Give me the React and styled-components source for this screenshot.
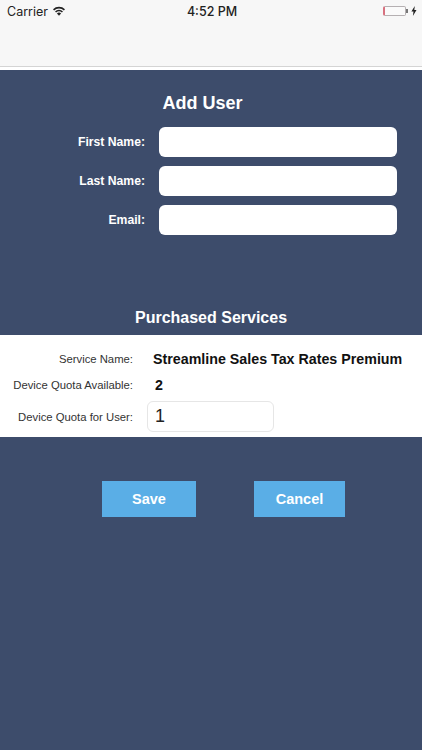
import React from 'react';
import styled, { createGlobalStyle } from 'styled-components';

const GlobalStyle = createGlobalStyle`
  html, body {
    margin: 0;
    padding: 0;
    background: #3d4c6b;
  }
  * {
    box-sizing: border-box;
  }
`;

const Page = styled.div`
  width: 422px;
  height: 750px;
  overflow: hidden;
  display: flex;
  flex-direction: column;
  background: #3d4c6b;
  font-family: "Liberation Sans", Arial, sans-serif;
`;

const Header = styled.div`
  height: 70px;
  background: #f7f7f7;
  border-bottom: 3px solid #fff;
  box-shadow: inset 0 -1px 0 #d4d4d4;
`;

const StatusBar = styled.div`
  height: 22px;
  display: grid;
  grid-template-columns: 1fr auto 1fr;
  align-items: center;
  padding: 0 5px 0 7px;
  color: #222;
  font-family: Inter, "Liberation Sans", sans-serif;
  font-size: 12.5px;
`;

const Carrier = styled.div`
  display: flex;
  align-items: center;
  gap: 5px;
`;

const Clock = styled.div`
  font-weight: 500;
  font-size: 12.5px;
`;

const Power = styled.div`
  display: flex;
  align-items: center;
  justify-content: flex-end;
  gap: 5px;
`;

const Battery = styled.div`
  position: relative;
  width: 23px;
  height: 10px;
  border: 1px solid #b5b0b2;
  border-left: 2px solid #d8717f;
  border-radius: 2px;
  background: #fafafa;
  &::after {
    content: '';
    position: absolute;
    right: -3px;
    top: 2px;
    width: 2px;
    height: 4px;
    background: #777;
  }
`;

const Section = styled.div`
  display: flex;
  flex-direction: column;
`;

const Title = styled.h2`
  margin: 0;
  text-align: center;
  color: #fff;
  font-weight: 700;
  font-size: ${({ $size }) => $size}px;
  line-height: 24px;
`;

const UserForm = styled(Section)`
  padding: 21px 25px 0 0;
  height: 218px;
  flex: none;
`;

const AddTitle = styled(Title)`
  margin: 0 0 0 8px;
`;

const FormRows = styled.div`
  margin-top: 12px;
  display: flex;
  flex-direction: column;
  gap: 9px;
`;

const FormRow = styled.label`
  display: grid;
  grid-template-columns: 145px 1fr;
  column-gap: 14px;
  align-items: center;
`;

const FormLabel = styled.span`
  padding-bottom: 1px;
  text-align: right;
  color: #fff;
  font-size: 12.2px;
  font-weight: 700;
`;

const FormInput = styled.input`
  width: 100%;
  height: 30px;
  border: none;
  border-radius: 6px;
  background: #fff;
  outline: none;
`;

const ServiceTitle = styled(Title)`
  margin-top: 18px;
`;

const ServicePanel = styled.div`
  margin-top: 5px;
  height: 102px;
  background: #fff;
  padding-top: 13px;
  display: flex;
  flex-direction: column;
`;

const ServiceRow = styled.div`
  display: grid;
  grid-template-columns: 133px 1fr;
  align-items: center;
  height: ${({ $height }) => $height}px;
`;

const ServiceLabel = styled.span`
  text-align: right;
  color: #333;
  font-size: 11.3px;
`;

const ServiceValue = styled.span`
  margin-left: ${({ $indent }) => $indent}px;
  color: #111;
  font-weight: 700;
  font-size: 14.25px;
  white-space: nowrap;
`;

const QuotaInput = styled.input`
  margin-left: 14px;
  width: 127px;
  height: 31px;
  border: 1px solid #e6e6e6;
  border-radius: 6px;
  padding: 0 7px;
  font-family: inherit;
  font-size: 18px;
  color: #222;
  outline: none;
`;

const Actions = styled.div`
  margin-top: 44px;
  display: flex;
  padding-left: 102px;
  gap: 58px;
`;

const ActionButton = styled.button`
  width: ${({ $width }) => $width}px;
  height: 36px;
  padding: 0 0 1px;
  border: none;
  background: #5aaee6;
  color: #fff;
  font-family: inherit;
  font-size: 14.5px;
  font-weight: 700;
`;

const WifiIcon = () => (
  <svg width="12" height="10" viewBox="0 0 12 10" fill="#222">
    <path d="M0 3.2a8.6 8.6 0 0 1 12 0l-1.1 1.2a7 7 0 0 0-9.8 0z" />
    <path d="M2 5.4a5.7 5.7 0 0 1 8 0L8.9 6.6a4.1 4.1 0 0 0-5.8 0z" />
    <path d="M3.9 7.5a3 3 0 0 1 4.2 0L6 9.8z" />
  </svg>
);

const BoltIcon = () => (
  <svg width="6" height="10" viewBox="0 0 6 10">
    <path d="M3.8 0 0.4 5.6h2.1L1.9 10l3.6-6H3.3z" fill="#222" />
  </svg>
);

const App = () => (
  <Page>
    <GlobalStyle />
    <Header>
      <StatusBar>
        <Carrier>
          Carrier
          <WifiIcon />
        </Carrier>
        <Clock>4:52 PM</Clock>
        <Power>
          <Battery />
          <BoltIcon />
        </Power>
      </StatusBar>
    </Header>
    <UserForm>
      <AddTitle $size={18}>Add User</AddTitle>
      <FormRows>
        {['First Name:', 'Last Name:', 'Email:'].map((label) => (
          <FormRow key={label}>
            <FormLabel>{label}</FormLabel>
            <FormInput />
          </FormRow>
        ))}
      </FormRows>
    </UserForm>
    <ServiceTitle $size={16}>Purchased Services</ServiceTitle>
    <ServicePanel>
      <ServiceRow $height={21}>
        <ServiceLabel>Service Name:</ServiceLabel>
        <ServiceValue $indent={20}>Streamline Sales Tax Rates Premium</ServiceValue>
      </ServiceRow>
      <ServiceRow $height={32}>
        <ServiceLabel>Device Quota Available:</ServiceLabel>
        <ServiceValue $indent={22}>2</ServiceValue>
      </ServiceRow>
      <ServiceRow $height={31}>
        <ServiceLabel>Device Quota for User:</ServiceLabel>
        <QuotaInput defaultValue="1" />
      </ServiceRow>
    </ServicePanel>
    <Actions>
      <ActionButton $width={94}>Save</ActionButton>
      <ActionButton $width={91}>Cancel</ActionButton>
    </Actions>
  </Page>
);

export default App;
